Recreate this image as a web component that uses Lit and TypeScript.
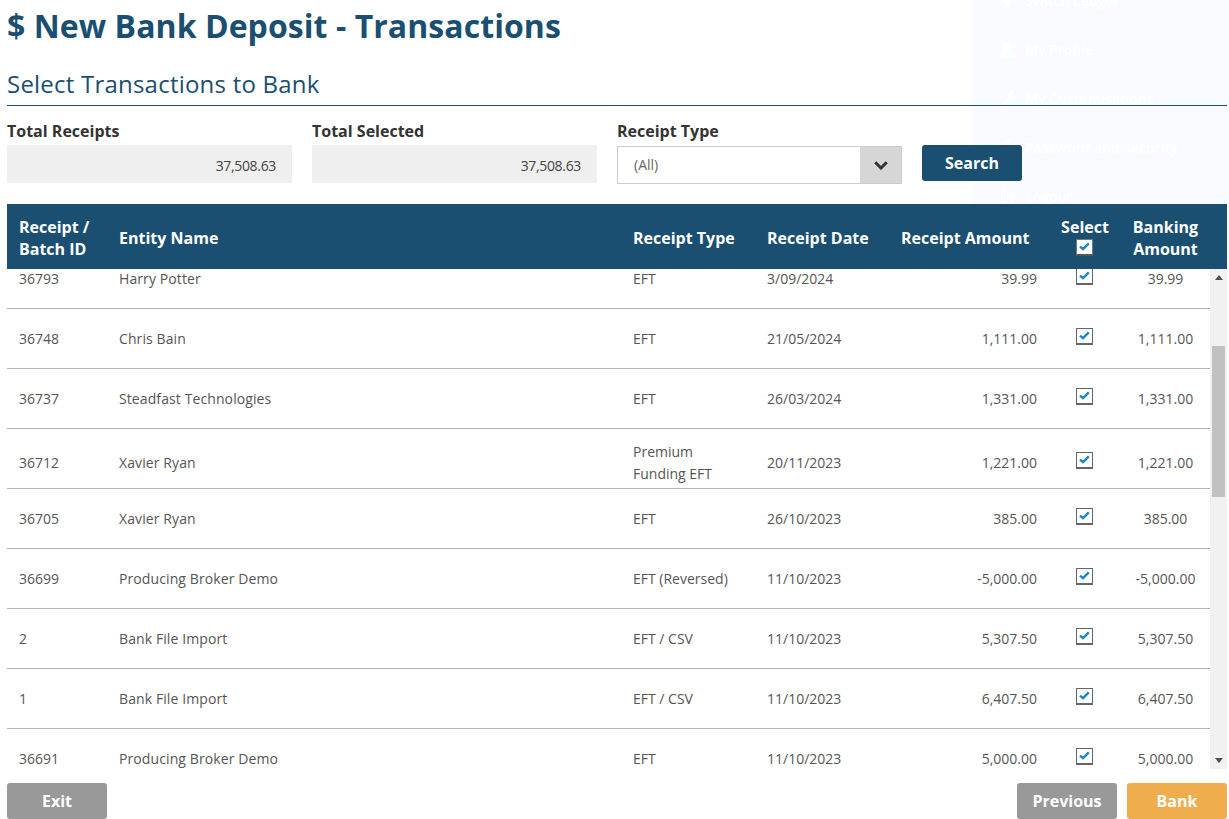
import { LitElement, html, css, svg } from "lit";
import { customElement } from "lit/decorators.js";

type Row = { id: string; name: string; type: string[]; date: string; amt: string };
const ROWS: Row[] = [
  { id: "36793", name: "Harry Potter", type: ["EFT"], date: "3/09/2024", amt: "39.99" },
  { id: "36748", name: "Chris Bain", type: ["EFT"], date: "21/05/2024", amt: "1,111.00" },
  { id: "36737", name: "Steadfast Technologies", type: ["EFT"], date: "26/03/2024", amt: "1,331.00" },
  { id: "36712", name: "Xavier Ryan", type: ["Premium", "Funding EFT"], date: "20/11/2023", amt: "1,221.00" },
  { id: "36705", name: "Xavier Ryan", type: ["EFT"], date: "26/10/2023", amt: "385.00" },
  { id: "36699", name: "Producing Broker Demo", type: ["EFT (Reversed)"], date: "11/10/2023", amt: "-5,000.00" },
  { id: "2", name: "Bank File Import", type: ["EFT / CSV"], date: "11/10/2023", amt: "5,307.50" },
  { id: "1", name: "Bank File Import", type: ["EFT / CSV"], date: "11/10/2023", amt: "6,407.50" },
  { id: "36691", name: "Producing Broker Demo", type: ["EFT"], date: "11/10/2023", amt: "5,000.00" },
];

const check = () => html`<span class="cb"><svg width="11" height="9" viewBox="0 0 11 9"><path d="M1 4.6 L4 7.2 L9.8 1.4" fill="none" stroke="#1b87c9" stroke-width="2.4"/></svg></span>`;

const MENU = [
  { label: "Switch Ledger", icon: svg`<path d="M11 0 L3 11 H9 L6 20 L16 7 H10 Z"/>` },
  { label: "My Profile", icon: svg`<circle cx="9" cy="6" r="5"/><path d="M1 18 C1 11 5 10 9 10 C13 10 17 11 17 18 Z"/>` },
  { label: "My Customisations", icon: svg`<path d="M2 18 L10 9 C9 4 12 1 17 2 L13 6 L15 8 L18 5 C18 10 15 12 11 11 L4 19 Z"/>` },
  { label: "Password and Security", icon: svg`<path d="M5 8 V5 C5 1 13 1 13 5 V8 H15 V18 H3 V8 Z"/>` },
  { label: "Logout", icon: svg`<path d="M8 3 H2 V17 H8 V15 H4 V5 H8 Z M9 6 H13 V2 L19 10 L13 17 V13 H9 Z"/>` },
];

@customElement("app-root")
export class AppRoot extends LitElement {
  static styles = css`
    :host {
      display: block;
      position: relative;
      height: 819px;
      overflow: hidden;
      background: #fff;
      font-family: "Open Sans", sans-serif;
      color: #555;
      font-size: 14px;
    }
    .ghost {
      position: absolute;
      top: -24px;
      left: 972px;
      width: 257px;
      height: 228px;
      background: #f8fbff;
      padding: 0 0 0 27px;
      box-sizing: border-box;
      display: flex;
      flex-direction: column;
      color: #fff;
      font-size: 14px;
      font-weight: 600;
    }
    .ghost div {
      height: 49px;
      flex: none;
      display: flex;
      align-items: center;
      gap: 8px;
    }
    .ghost svg { width: 18px; height: 20px; fill: #fff; flex: none; }
    .page {
      position: relative;
      display: flex;
      flex-direction: column;
      height: 819px;
      padding: 0 2px 0 7px;
      box-sizing: border-box;
    }
    h1 {
      margin: 0;
      height: 52px;
      line-height: 52px;
      font-size: 32px;
      letter-spacing: 0.06px;
      font-weight: 700;
      color: #1a4f72;
    }
    h2 {
      margin: 0;
      height: 54px;
      padding-top: 12px;
      box-sizing: border-box;
      line-height: 40px;
      font-size: 24px;
      letter-spacing: 0.22px;
      font-weight: 400;
      color: #1a4f72;
      border-bottom: 1px solid #1a4f72;
    }
    .filters {
      display: flex;
      gap: 20px;
      align-items: flex-start;
      height: 98px;
      padding-top: 14px;
      box-sizing: border-box;
    }
    .field { width: 285px; }
    .field label {
      display: block;
      height: 25px;
      line-height: 22px;
      font-size: 16px;
      font-weight: 700;
      color: #333;
    }
    .ro {
      height: 38px;
      background: #efefef;
      text-align: right;
      line-height: 41px;
      padding-right: 16px;
      color: #444;
      letter-spacing: -0.33px;
    }
    .select {
      height: 38px;
      margin-top: 1px;
      box-sizing: border-box;
      border: 1px solid #ccc;
      display: flex;
      background: #fff;
    }
    .select span {
      flex: 1;
      padding-left: 16px;
      line-height: 35px;
      color: #666;
    }
    .select i {
      width: 41px;
      background: #d6d6d6;
      display: flex;
      align-items: center;
      justify-content: center;
    }
    .btn {
      width: 100px;
      height: 36px;
      border-radius: 3px;
      color: #fff;
      font-size: 16px;
      font-weight: 700;
      display: flex;
      align-items: center;
      justify-content: center;
      box-sizing: border-box;
    }
    .search { background: #1a4f72; margin-top: 25px; }
    .grey { background: #999; }
    .orange { background: #f0ad4e; }
    .cols {
      display: grid;
      grid-template-columns: 100px 514px 134px 134px 160px 72px 89px;
    }
    .head {
      background: #1a4f72;
      color: #fff;
      height: 65px;
      font-size: 16px;
      font-weight: 700;
      line-height: 22px;
      align-items: center;
    }
    .head > div { padding: 2px 0 0 12px; }
    .head > .ctr { padding: 2px 0 0; text-align: center; }
    .head > .sel {
      padding: 0 0 2px;
      display: flex;
      flex-direction: column;
      align-items: center;
    }
    .sel .cb { margin-top: 1px; border-color: #777; border-bottom-color: #555; }
    .tbl { display: flex; height: 500px; overflow: hidden; }
    .rows { width: 1203px; margin-top: -20px; flex: none; }
    .row {
      height: 60px;
      box-sizing: border-box;
      border-bottom: 1px solid #b5b5b5;
      align-items: center;
      line-height: 22px;
      color: #555;
    }
    .row.tall { padding-top: 8px; }
    .row > div { padding-left: 12px; }
    .row > .name { letter-spacing: 0.1px; }
    .row > .r { padding: 0 12px 0 0; text-align: right; }
    .row > .ctr { padding: 0; text-align: center; }
    .row > .ck { padding: 0; display: flex; justify-content: center; margin-top: -5px; }
    .cb {
      width: 17px;
      height: 17px;
      margin-left: -1px;
      box-sizing: border-box;
      border: 1px solid #666;
      border-bottom: 2px solid #666;
      background: #fff;
      display: flex;
      align-items: center;
      justify-content: center;
    }
    .bar {
      width: 17px;
      background: #f1f1f1;
      display: flex;
      flex-direction: column;
      align-items: center;
      flex: none;
    }
    .arrow { height: 17px; display: flex; align-items: center; justify-content: center; flex: none; }
    .track { flex: 1; width: 100%; padding-top: 60px; box-sizing: border-box; }
    .thumb { height: 151px; margin: 0 2px; background: #c1c1c1; }
    .foot { display: flex; gap: 10px; margin-top: 14px; }
    .spacer { flex: 1; }
  `;

  render() {
    return html`
      <div class="ghost">
        ${MENU.map((m) => html`<div><svg viewBox="0 0 20 20">${m.icon}</svg>${m.label}</div>`)}
      </div>
      <div class="page">
        <h1>$ New Bank Deposit - Transactions</h1>
        <h2>Select Transactions to Bank</h2>
        <div class="filters">
          <div class="field"><label>Total Receipts</label><div class="ro">37,508.63</div></div>
          <div class="field"><label>Total Selected</label><div class="ro">37,508.63</div></div>
          <div class="field">
            <label>Receipt Type</label>
            <div class="select">
              <span>(All)</span>
              <i><svg width="14" height="9" viewBox="0 0 14 9"><path d="M1.2 1.2 L7 7 L12.8 1.2" fill="none" stroke="#333" stroke-width="3"/></svg></i>
            </div>
          </div>
          <div class="btn search">Search</div>
        </div>
        <div class="cols head">
          <div>Receipt /<br />Batch ID</div>
          <div>Entity Name</div>
          <div>Receipt Type</div>
          <div>Receipt Date</div>
          <div>Receipt Amount</div>
          <div class="sel">Select${check()}</div>
          <div class="ctr">Banking<br />Amount</div>
        </div>
        <div class="tbl">
          <div class="rows">
            ${ROWS.map(
              (r) => html`<div class="cols row ${r.type.length > 1 ? "tall" : ""}">
                <div>${r.id}</div>
                <div class="name">${r.name}</div>
                <div>${r.type.map((t, i) => html`${i ? html`<br />` : ""}${t}`)}</div>
                <div>${r.date}</div>
                <div class="r">${r.amt}</div>
                <div class="ck">${check()}</div>
                <div class="ctr">${r.amt}</div>
              </div>`
            )}
          </div>
          <div class="bar">
            <div class="arrow"><svg width="8" height="5" viewBox="0 0 8 5"><path d="M4 0 L8 5 H0 Z" fill="#505050"/></svg></div>
            <div class="track"><div class="thumb"></div></div>
            <div class="arrow"><svg width="8" height="5" viewBox="0 0 8 5"><path d="M0 0 H8 L4 5 Z" fill="#505050"/></svg></div>
          </div>
        </div>
        <div class="foot">
          <div class="btn grey">Exit</div>
          <div class="spacer"></div>
          <div class="btn grey">Previous</div>
          <div class="btn orange">Bank</div>
        </div>
      </div>
    `;
  }
}
